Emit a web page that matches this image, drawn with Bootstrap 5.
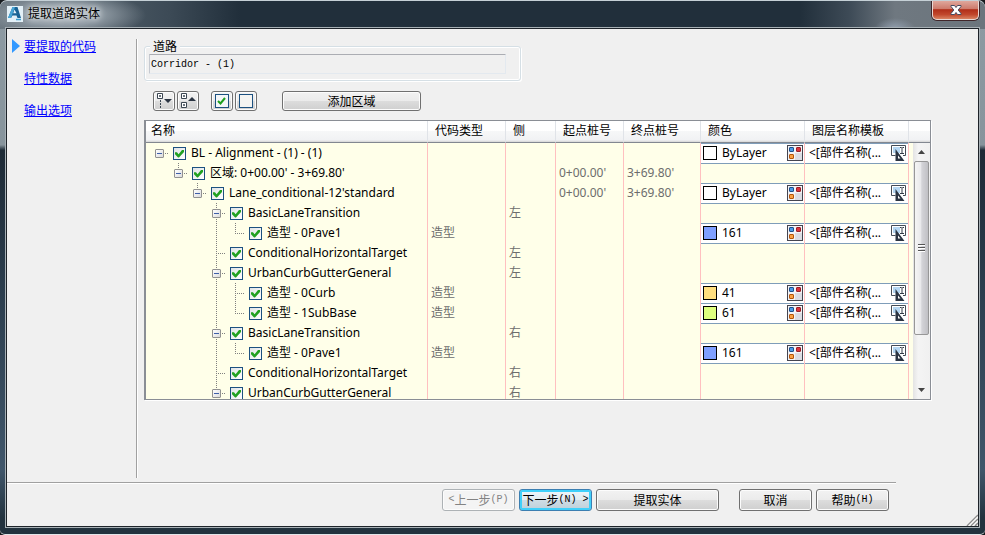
<!DOCTYPE html>
<html lang="zh-CN">
<head>
<meta charset="utf-8">
<meta name="viewport" content="width=device-width, initial-scale=1">
<title>提取道路实体</title>
<link href="https://cdn.jsdelivr.net/npm/bootstrap@5.3.0/dist/css/bootstrap.min.css" rel="stylesheet">
<style>
  body { font-family: "Noto Sans", "Noto Sans CJK SC", sans-serif; font-size: 12px; line-height: 16px; color: #000; background: #15191d; }
  .win-frame { padding: 0 6px 7px 6px; border: 1px solid #c5d0d6; border-bottom-color: #e2e6e9; border-width: 1px 0; border-radius: 7px 7px 5px 5px;
    background:
      radial-gradient(ellipse 84px 24px at 62px 14px, #aab3ba 0, #8f9aa3 45%, transparent 100%) no-repeat,
      radial-gradient(ellipse 20px 10px at 895px 27px, #8f9cab 0, transparent 100%) no-repeat,
      linear-gradient(90deg, #65727b 0, #3c4a56 170px, #212f3b 240px, #212f3b 800px, #3e4b57 850px, #6f7880 895px, #6b757d 100%) 0 0 / 100% 28px no-repeat,
      linear-gradient(180deg, #8e9ba3 0, #87949c 27%, #1d2a36 28%, #2c3e4e 55%, #40566a 88%, #22323e 97%); }
  .title-row { height: 27px; padding-left: 1px; }
  .title-text { margin: 0 0 0 5px; padding-top: 4px; text-shadow: 0 0 6px #fff, 0 0 9px #dfe5e8; }
  .close-btn { width: 47px; height: 19px; border: 1px solid #e8d8d4; border-top: 0; border-radius: 0 0 5px 5px; box-shadow: 0 0 0 1px #40262a;
    background: linear-gradient(#dfa79c 0, #cd7a6b 44%, #b02e19 48%, #c1472c 75%, #d98261 100%); }
  .client { background: #f0f0f0; border: 1px solid #1d2329; outline: 1px solid #a7b0b5; }
  .body-area { min-height: 0; }
  .side-nav { width: 130px; margin: 10px 0 4px; padding: 0 5px; gap: 18px; border-right: 1px solid #a0a0a0; box-shadow: 1px 0 #fff; }
  .song { font-family: "Noto Sans CJK SC", sans-serif; font-size: 12px; line-height: 16px; }
  .side-nav.song { line-height: 14px; }
  .song a { color: #00f; }
  .mono { font-family: "Liberation Mono", monospace; font-size: 10px; }
  .here { width: 8px; height: 14px; background: #3399ff; clip-path: polygon(0 0, 100% 50%, 0 100%); }
  .work { margin: 9px 47px 82px 7px; min-width: 0; min-height: 0; }
  .road-set { width: 377px; border: 1px solid #d5dfe5; border-radius: 3px; padding: 0 14px 6px 4px; box-shadow: inset 0 0 0 1px #fff, 1px 1px #fff; }
  .road-set legend { font-size: 12px; line-height: 16px; margin: -8px 0 0 1px; padding: 0 3px; width: auto; float: none; background: #f0f0f0; }
  .road-set input { height: 20px; padding: 0 1px; color: #000; font-size: 10px; line-height: 16px; border: 1px solid #e3e9ef; border-top-color: #abadb3; border-left-color: #c5c9d0; border-radius: 1px; background: #f0f0f0; }
  .tool-row { margin: 10px 0 9px; padding-left: 9px; gap: 2px; }
  .win-btn { height: 22px; padding: 0; font-size: 12px; line-height: 16px; color: #000; border: 1px solid #707070; border-radius: 3px; box-shadow: inset 0 0 0 1px #fcfcfc; background: linear-gradient(#f2f2f2 0, #ebebeb 49%, #dddddd 50%, #cfcfcf 100%); display: inline-flex; align-items: center; justify-content: center; white-space: pre; }
  .tool-row .win-btn { height: 20px; width: 22px; }
  .tool-row .apart { margin-left: 10px; }
  .tool-row .wide { width: 139px; margin-left: 23px; }
  .w-std { width: 73px; }
  .w-long { width: 123px; }
  .win-btn:disabled { color: #838383; opacity: 1; border-color: #adb2b5; background: #f4f4f4; }
  .is-default { border-color: #3c7fb1; box-shadow: inset 0 0 0 2px #40d0fa; background: linear-gradient(#eef5f9 0, #e2ecf1 49%, #cfdde5 50%, #bed0da 100%); }
  .foot { height: 42px; padding: 5px 89px 0 0; }
  .foot-rule { height: 2px; margin-right: 82px; background: linear-gradient(#a0a0a0 50%, #fff 50%); }
  .tree-panel { border: 1px solid #8a8e95; border-left-width: 2px; box-shadow: 1px 1px #fff; background: #ffffe9; min-height: 0; }
  .tree-grid { table-layout: fixed; width: 100%; border-collapse: separate; border-spacing: 0; }
  .tree-grid th { height: 22px; padding: 0 0 1px 7px; font-weight: 400; white-space: nowrap; background: linear-gradient(#fff 0, #fff 45%, #f6f7f8 50%, #f1f2f4 90%, #d5d5d5 100%); border-bottom: 1px solid #828790; border-right: 1px solid #e0e3e8; }
  .tree-grid th:first-child { padding-left: 5px; }
  .tree-grid td { height: 20px; padding: 0 0 0 3px; line-height: 18px; border-right: 1px solid #ffc0c0; white-space: nowrap; overflow: hidden; color: #6d6d6d; }
  .tree-grid td:last-child, .tree-grid th:last-child { border-right: 0; }
  .tree-grid td.name { padding-left: 8px; color: #000; }
  .tree-grid td.pick { padding: 0 1px 0 2px; color: #000; background: #fff; box-shadow: inset 0 1px #7f9db9, 0 1px #7f9db9; overflow: visible; }
  .tree-line { height: 20px; }
  .tree-line label { padding: 0 0 1px 5px; }
  .step { width: 19px; height: 20px; flex: none; }
  .guide { background: repeating-linear-gradient(180deg, #808080 0 1px, transparent 1px 2px) 5px 0 / 1px 20px no-repeat; }
  .joint { padding: 6px 0 0 1px; line-height: 0; }
  .j-root { background: repeating-linear-gradient(90deg, #808080 0 1px, transparent 1px 2px) 11px 10px / 3px 1px no-repeat; }
  .j-end { background: repeating-linear-gradient(180deg, #808080 0 1px, transparent 1px 2px) 5px 0 / 1px 11px no-repeat, repeating-linear-gradient(90deg, #808080 0 1px, transparent 1px 2px) 5px 10px / 9px 1px no-repeat; }
  .j-mid { background: repeating-linear-gradient(180deg, #808080 0 1px, transparent 1px 2px) 5px 0 / 1px 20px no-repeat, repeating-linear-gradient(90deg, #808080 0 1px, transparent 1px 2px) 5px 10px / 9px 1px no-repeat; }
  .fold { width: 9px; height: 9px; padding: 0; border: 1px solid #919191; border-radius: 1px; background: linear-gradient(#3f5fa8, #3f5fa8) 1px 3px / 5px 1px no-repeat, linear-gradient(135deg, #fff, #dcdcdc); }
  .form-check-input.tick { width: 13px; height: 13px; margin: 0; flex: none; border: 1px solid #1c5180; border-radius: 0; background: linear-gradient(135deg, #dfe3e6, #fff); }
  .form-check-input.tick::before { content: ""; display: block; width: 9px; height: 8px; margin: 2px 1px; background: #21a121; clip-path: polygon(0 34%, 22% 34%, 40% 60%, 82% 0, 100% 0, 100% 30%, 44% 100%, 34% 100%, 0 60%); }
  .swatch { width: 14px; height: 14px; margin-right: 5px; border: 1px solid #000; flex: none; }
  .sw-white { background: #fff; } .sw-161 { background: #7f9fff; } .sw-41 { background: #ffdf7f; } .sw-61 { background: #dfff7f; }
  .icon-btn { padding: 0; border: 0; background: none; width: 16px; height: 16px; line-height: 0; flex: none; }
  .icon-btn svg, .win-btn svg, .close-btn svg { display: block; }
  .tpl { padding-left: 2px; }
  .rail { position: absolute; top: 22px; right: 0; bottom: 0; width: 17px; background: linear-gradient(90deg, #e3e3e3, #f4f4f4 30%, #f0f0f0); }
  .rail-btn { height: 18px; width: 17px; padding: 0; border: 0; background: none; line-height: 0; }
  .thumb { flex: 0 0 68%; margin: 0 1px; border: 1px solid #979797; border-radius: 2px; background: linear-gradient(90deg, #f5f5f5 0, #e9e9eb 45%, #d4d4d8 52%, #c0c0c4 100%); }
  .grip { width: 7px; height: 8px; background: repeating-linear-gradient(#555 0 1px, #fff 1px 2px, transparent 2px 3px); }
  .size-grip { position: absolute; right: 0; bottom: 0; }
</style>
</head>
<body>
<svg class="d-none" aria-hidden="true">
  <symbol id="i-palette" viewBox="0 0 16 16">
    <rect x=".5" y=".5" width="15" height="15" fill="#f4f4f7" stroke="#454550"/>
    <path d="M8 15V8H15V15Z" fill="#dcdde4"/>
    <rect x="2.500" y="2.500" width="4" height="4" rx=".5" fill="#4b9be6" stroke="#1d4f8c"/>
    <rect x="9.500" y="2.500" width="4" height="4" rx=".5" fill="#d9363e" stroke="#9a2028"/>
    <rect x="2.500" y="9.500" width="4" height="4" rx=".5" fill="#f8a045" stroke="#b3560c"/>
  </symbol>
  <symbol id="i-template" viewBox="0 0 16 16">
    <path d="M.5.5h14v10H.5Z" fill="#fff"/>
    <path d="M4.500 10.500H.5V.5H14.500V10.500H12" fill="none" stroke="#444c56"/>
    <rect x="2" y="2" width="7" height="6" fill="#b4d6f2"/>
    <path d="M9 2.500h1.500M11.500 2.500H13M11 2.500v6M9 8.500h4" fill="none" stroke="#333b47"/>
    <path fill-rule="evenodd" d="M4.500 4V16H13.500ZM7 10.500V13.500H9.500Z" fill="#2b3442"/>
  </symbol>
  <symbol id="i-mark" viewBox="0 0 9 9"><path d="M1 4 3.500 6.500 8 1" fill="none" stroke="#1fa01f" stroke-width="2"/></symbol>
</svg>

<div class="win-frame vh-100 d-flex flex-column overflow-hidden">
  <header class="title-row d-flex align-items-start flex-shrink-0">
    <svg class="mt-1" width="16" height="18" viewBox="0 0 16 18" aria-hidden="true">
      <rect y="1" width="16" height="16" fill="#e3f0f7"/>
      <path d="M5.500 2H10.500L14 13H10.500L9.500 10.500H5.500L4 13H1ZM7.500 4.500 6.200 8.300H9.500Z" fill="#1a6495" fill-rule="evenodd"/>
      <path d="M5.500 2H8L4 13H1Z" fill="#4aa7d6"/><path d="M9 14.500h5" stroke="#3c9fd0" stroke-width="1.500"/>
    </svg>
    <h1 class="title-text song fw-normal">提取道路实体</h1>
    <button class="close-btn ms-auto p-0 d-flex align-items-center justify-content-center" aria-label="关闭">
      <svg width="12" height="10" viewBox="0 0 12 10"><path d="M1 .5h3.500L6 2.500 7.500.5H11v1L8.200 5 11 8.500v1H7.500L6 7.500 4.500 9.500H1v-1L3.800 5 1 1.500Z" fill="#fff" stroke="#454b60"/></svg>
    </button>
  </header>

  <main class="client position-relative flex-grow-1 d-flex flex-column overflow-hidden">
    <div class="body-area flex-grow-1 d-flex">
      <nav class="side-nav song d-flex flex-column flex-shrink-0">
        <div class="d-flex align-items-center"><span class="here me-1"></span><a href="#">要提取的代码</a></div>
        <div class="ps-2 ms-1"><a href="#">特性数据</a></div>
        <div class="ps-2 ms-1"><a href="#">输出选项</a></div>
      </nav>

      <section class="work flex-grow-1 d-flex flex-column">
        <fieldset class="road-set flex-shrink-0">
          <legend class="song"><label for="road">道路</label></legend>
          <input id="road" class="form-control mono" type="text" value="Corridor - (1)" readonly>
        </fieldset>
        <div class="tool-row d-flex flex-shrink-0">
          <button class="win-btn" aria-label="展开">
            <svg width="18" height="16" viewBox="0 0 18 16"><path d="M2.500.5h5v5h-5zM4.500 2.500h1v1h-1z" fill="#fff" stroke="#3b4652"/><path d="M5.500 7v8" stroke="#3b4652" stroke-dasharray="2 1"/><path d="M9 6h8l-4 4z" fill="#2b3442"/></svg>
          </button>
          <button class="win-btn" aria-label="折叠">
            <svg width="18" height="16" viewBox="0 0 18 16"><path d="M2.500.5h5v5h-5zM4.500 2.500h1v1h-1zM2.500 9.500h5v5h-5zM4.500 11.500h1v1h-1z" fill="#fff" stroke="#3b4652"/><path d="M9 8h8l-4-4z" fill="#2b3442"/></svg>
          </button>
          <button class="win-btn apart" aria-label="全选">
            <svg width="14" height="14" viewBox="0 0 14 14"><rect x=".5" y=".5" width="13" height="13" fill="#f4f6f8" stroke="#1c5180"/><use href="#i-mark" x="2" y="3" width="9" height="9"/></svg>
          </button>
          <button class="win-btn" aria-label="全部不选">
            <svg width="14" height="14" viewBox="0 0 14 14"><rect x=".5" y=".5" width="13" height="13" fill="#f4f4f2" stroke="#1c5180"/></svg>
          </button>
          <button class="win-btn wide song">添加区域</button>
        </div>

        <div class="tree-panel position-relative overflow-hidden flex-grow-1">
          <table class="tree-grid">
            <colgroup><col><col width="78"><col width="50"><col width="68"><col width="77"><col width="104"><col width="104"><col width="21"></colgroup>
            <thead><tr><th>名称</th><th>代码类型</th><th>侧</th><th>起点桩号</th><th>终点桩号</th><th>颜色</th><th>图层名称模板</th><th></th></tr></thead>
            <tbody id="rows"></tbody>
          </table>
          <div class="rail d-flex flex-column">
            <button class="rail-btn" aria-label="向上滚动"><svg width="7" height="4"><path d="M0 4 3.500 0 7 4Z" fill="#444"/></svg></button>
            <div class="thumb d-flex align-items-center justify-content-center"><span class="grip"></span></div>
            <button class="rail-btn mt-auto" aria-label="向下滚动"><svg width="7" height="4"><path d="M0 0H7L3.500 4Z" fill="#444"/></svg></button>
          </div>
        </div>
      </section>
    </div>

    <div class="foot-rule flex-shrink-0"></div>
    <footer class="foot d-flex justify-content-end flex-shrink-0">
      <button class="win-btn w-std song me-1" disabled><span class="mono">&lt;</span>上一步<span class="mono">(P)</span></button>
      <button class="win-btn w-std song is-default me-1">下一步<span class="mono">(N) &gt;</span></button>
      <button class="win-btn w-long song me-3">提取实体</button>
      <button class="win-btn w-std song ms-1 me-1">取消</button>
      <button class="win-btn w-std song">帮助<span class="mono">(H)</span></button>
    </footer>
    <svg class="size-grip" width="12" height="12" viewBox="0 0 12 12" aria-hidden="true"><path d="M1 12 12 1M5 12 12 5M9 12 12 9" stroke="#8c8c8c" stroke-width="1.500"/><path d="M2.500 12 12 2.500M6.500 12 12 6.500" stroke="#fff"/></svg>
  </main>
</div>

<script src="https://cdn.jsdelivr.net/npm/bootstrap@5.3.0/dist/js/bootstrap.bundle.min.js"></script>
<script>
  // depth, has children, has a following sibling, name, code type, side, start, end, colour class, colour name
  const items = [
    [0, 1, 0, "BL - Alignment - (1) - (1)", "", "", "", "", "white", "ByLayer"],
    [1, 1, 0, "区域: 0+00.00' - 3+69.80'", "", "", "0+00.00'", "3+69.80'"],
    [2, 1, 0, "Lane_conditional-12'standard", "", "", "0+00.00'", "3+69.80'", "white", "ByLayer"],
    [3, 1, 1, "BasicLaneTransition", "", "左"],
    [4, 0, 0, "造型 - 0Pave1", "造型", "", "", "", "161", "161"],
    [3, 0, 1, "ConditionalHorizontalTarget", "", "左"],
    [3, 1, 1, "UrbanCurbGutterGeneral", "", "左"],
    [4, 0, 1, "造型 - 0Curb", "造型", "", "", "", "41", "41"],
    [4, 0, 0, "造型 - 1SubBase", "造型", "", "", "", "61", "61"],
    [3, 1, 1, "BasicLaneTransition", "", "右"],
    [4, 0, 0, "造型 - 0Pave1", "造型", "", "", "", "161", "161"],
    [3, 0, 1, "ConditionalHorizontalTarget", "", "右"],
    [3, 1, 1, "UrbanCurbGutterGeneral", "", "右"]
  ];
  const row = ([depth, kids, more, name, type = "", side = "", from = "", to = "", sw, colour], i) => {
    let steps = "";
    for (let d = 0; d < depth; d++) steps += `<span class="step${d === 3 ? " guide" : ""}"></span>`;
    const joint = depth === 0 ? "j-root" : more ? "j-mid" : "j-end";
    const fold = kids ? '<button class="fold" aria-label="折叠"></button>' : "";
    const picks = sw
      ? `<td class="pick"><div class="d-flex align-items-center"><span class="swatch sw-${sw}"></span><span>${colour}</span><button class="icon-btn ms-auto" aria-label="选择颜色"><svg width="16" height="16"><use href="#i-palette"/></svg></button></div></td>
         <td class="pick"><div class="d-flex align-items-center tpl"><span>&lt;[部件名称(...</span><button class="icon-btn ms-auto" aria-label="编辑模板"><svg width="16" height="16"><use href="#i-template"/></svg></button></div></td>`
      : "<td></td><td></td>";
    return `<tr><td class="name"><div class="tree-line d-flex align-items-center">${steps}<span class="step joint ${joint}">${fold}</span><input class="form-check-input tick" type="checkbox" id="n${i}" checked><label for="n${i}">${name}</label></div></td>
      <td>${type}</td><td>${side}</td><td>${from}</td><td>${to}</td>${picks}<td></td></tr>`;
  };
  document.getElementById("rows").innerHTML = items.map(row).join("");
</script>
</body>
</html>
